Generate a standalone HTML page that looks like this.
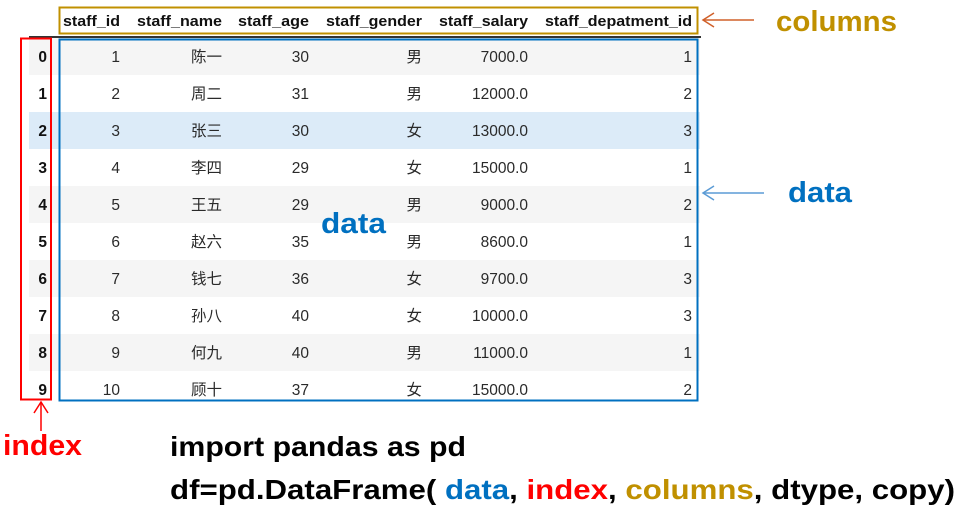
<!DOCTYPE html>
<html><head><meta charset="utf-8"><style>
html,body{margin:0;padding:0;background:#fff;width:971px;height:515px;overflow:hidden}
svg{display:block}
.t{font-family:"Liberation Sans","Noto Sans CJK SC",sans-serif;font-size:15.5px;fill:#2a2a2a}
.h{font-family:"Liberation Sans",sans-serif;font-size:15px;font-weight:bold;fill:#111}
.ix{font-family:"Liberation Sans",sans-serif;font-size:15.5px;font-weight:bold;fill:#111}
.big{font-family:"Liberation Sans",sans-serif;font-weight:bold}
</style></head><body>
<svg width="971" height="515" xmlns="http://www.w3.org/2000/svg">
<rect x="29" y="38" width="671" height="37" fill="#f5f5f5"/>
<rect x="29" y="112" width="671" height="37" fill="#dcebf8"/>
<rect x="29" y="186" width="671" height="37" fill="#f5f5f5"/>
<rect x="29" y="260" width="671" height="37" fill="#f5f5f5"/>
<rect x="29" y="334" width="671" height="37" fill="#f5f5f5"/>
<rect x="29" y="36" width="672" height="2" fill="#333"/>
<g class="h">
<text x="63" y="26" textLength="57" lengthAdjust="spacingAndGlyphs">staff_id</text>
<text x="137" y="26" textLength="85" lengthAdjust="spacingAndGlyphs">staff_name</text>
<text x="238" y="26" textLength="71" lengthAdjust="spacingAndGlyphs">staff_age</text>
<text x="326" y="26" textLength="96" lengthAdjust="spacingAndGlyphs">staff_gender</text>
<text x="439" y="26" textLength="89" lengthAdjust="spacingAndGlyphs">staff_salary</text>
<text x="545" y="26" textLength="147" lengthAdjust="spacingAndGlyphs">staff_depatment_id</text>
</g>
<rect x="59.5" y="7.5" width="638" height="26" fill="none" stroke="#c09000" stroke-width="2"/>
<g class="ix" text-anchor="end">
<text x="47" y="62">0</text><text x="47" y="99">1</text><text x="47" y="136">2</text><text x="47" y="173">3</text><text x="47" y="210">4</text><text x="47" y="247">5</text><text x="47" y="284">6</text><text x="47" y="321">7</text><text x="47" y="358">8</text><text x="47" y="395">9</text>
</g>
<g class="t" text-anchor="end">
<text x="120" y="62">1</text><text x="222" y="62">陈一</text><text x="309" y="62">30</text><text x="422" y="62">男</text><text x="528" y="62">7000.0</text><text x="692" y="62">1</text>
<text x="120" y="99">2</text><text x="222" y="99">周二</text><text x="309" y="99">31</text><text x="422" y="99">男</text><text x="528" y="99">12000.0</text><text x="692" y="99">2</text>
<text x="120" y="136">3</text><text x="222" y="136">张三</text><text x="309" y="136">30</text><text x="422" y="136">女</text><text x="528" y="136">13000.0</text><text x="692" y="136">3</text>
<text x="120" y="173">4</text><text x="222" y="173">李四</text><text x="309" y="173">29</text><text x="422" y="173">女</text><text x="528" y="173">15000.0</text><text x="692" y="173">1</text>
<text x="120" y="210">5</text><text x="222" y="210">王五</text><text x="309" y="210">29</text><text x="422" y="210">男</text><text x="528" y="210">9000.0</text><text x="692" y="210">2</text>
<text x="120" y="247">6</text><text x="222" y="247">赵六</text><text x="309" y="247">35</text><text x="422" y="247">男</text><text x="528" y="247">8600.0</text><text x="692" y="247">1</text>
<text x="120" y="284">7</text><text x="222" y="284">钱七</text><text x="309" y="284">36</text><text x="422" y="284">女</text><text x="528" y="284">9700.0</text><text x="692" y="284">3</text>
<text x="120" y="321">8</text><text x="222" y="321">孙八</text><text x="309" y="321">40</text><text x="422" y="321">女</text><text x="528" y="321">10000.0</text><text x="692" y="321">3</text>
<text x="120" y="358">9</text><text x="222" y="358">何九</text><text x="309" y="358">40</text><text x="422" y="358">男</text><text x="528" y="358">11000.0</text><text x="692" y="358">1</text>
<text x="120" y="395">10</text><text x="222" y="395">顾十</text><text x="309" y="395">37</text><text x="422" y="395">女</text><text x="528" y="395">15000.0</text><text x="692" y="395">2</text>
</g>
<rect x="21" y="38.5" width="30" height="361" fill="none" stroke="#f00" stroke-width="2"/>
<rect x="59.5" y="39.5" width="638" height="361" fill="none" stroke="#0070c0" stroke-width="2"/>
<g stroke="#d0602a" stroke-width="1.5" fill="none"><line x1="754" y1="20" x2="703" y2="20"/><polyline points="714,13 703,20 714,27"/></g>
<g stroke="#5b9bd5" stroke-width="1.5" fill="none"><line x1="764" y1="193" x2="703" y2="193"/><polyline points="714,186 703,193 714,200"/></g>
<g stroke="#f00" stroke-width="1.5" fill="none"><line x1="41" y1="431" x2="41" y2="402"/><polyline points="34,413 41,402 48,413"/></g>
<text class="big" x="776" y="31" font-size="29" fill="#c09000" textLength="121" lengthAdjust="spacingAndGlyphs">columns</text>
<text class="big" x="788" y="202" font-size="29" fill="#0070c0" textLength="64" lengthAdjust="spacingAndGlyphs">data</text>
<text class="big" x="321" y="233" font-size="29" fill="#0070c0" textLength="65" lengthAdjust="spacingAndGlyphs">data</text>
<text class="big" x="3" y="455" font-size="29" fill="#f00" textLength="79" lengthAdjust="spacingAndGlyphs">index</text>
<text class="big" x="170" y="456" font-size="28" fill="#000" textLength="296" lengthAdjust="spacingAndGlyphs">import pandas as pd</text>
<text class="big" x="170" y="499" font-size="28" fill="#000" textLength="785" lengthAdjust="spacingAndGlyphs">df=pd.DataFrame( <tspan fill="#0070c0">data</tspan>, <tspan fill="#f00">index</tspan>, <tspan fill="#c09000">columns</tspan>, dtype, copy)</text>
</svg>
</body></html>
